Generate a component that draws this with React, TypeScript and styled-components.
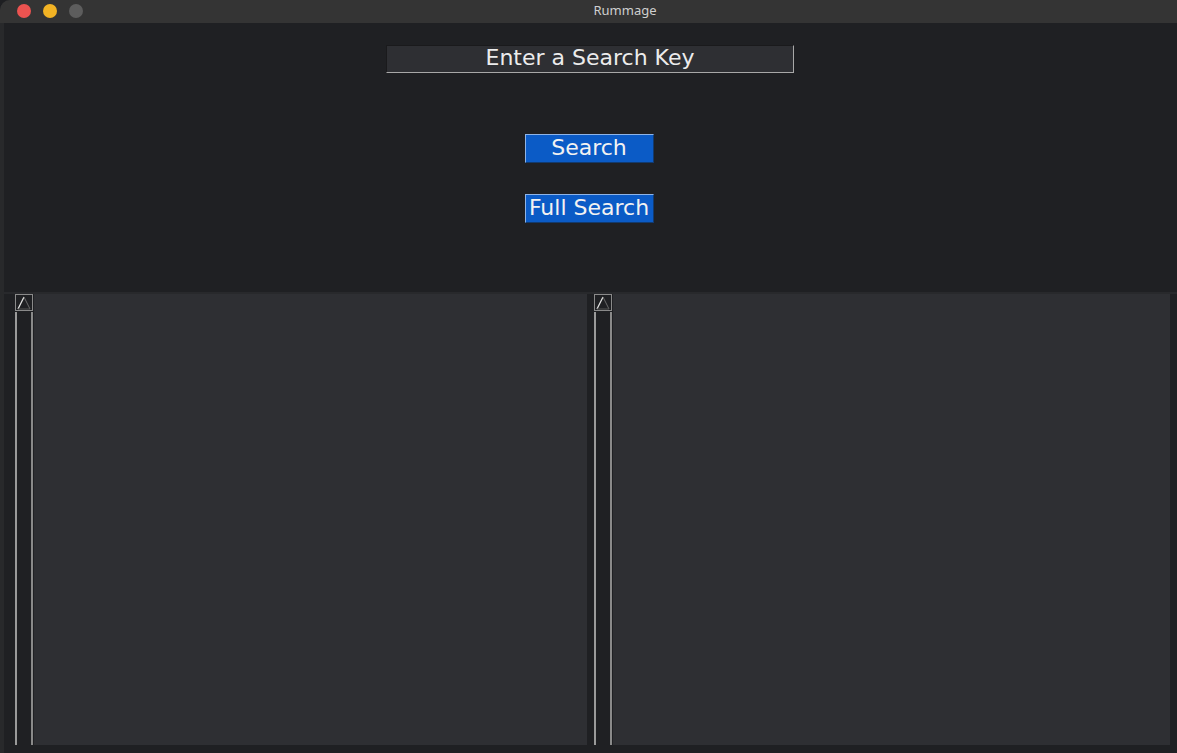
import React from "react";
import styled, { createGlobalStyle } from "styled-components";

const Global = createGlobalStyle`
  html, body { margin: 0; padding: 0; background: #1e1f22; }
  #root { width: 1177px; height: 753px; }
`;

const Window = styled.div`
  width: 1177px;
  height: 753px;
  display: flex;
  flex-direction: column;
  background: #28292b;
  border-radius: 10px 0 0 0;
  overflow: hidden;
  font-family: "DejaVu Sans", sans-serif;
`;

const TitleBar = styled.div`
  height: 23px;
  flex: none;
  background: #343434;
  position: relative;
  display: flex;
  align-items: center;
  justify-content: center;
`;

const Title = styled.div`
  font-family: "Noto Sans", "DejaVu Sans", sans-serif;
  font-size: 13px;
  color: #cfcfcf;
  padding-left: 73px;
  padding-bottom: 3px;
`;

const Lights = styled.div`
  position: absolute;
  left: 17px;
  top: 4px;
  display: flex;
  gap: 12px;
`;

const Light = styled.span<{ $c: string }>`
  width: 14px;
  height: 14px;
  border-radius: 50%;
  background: ${(p) => p.$c};
`;

const Body = styled.div`
  flex: 1;
  margin-left: 4px;
  background: #1f2023;
  display: flex;
  flex-direction: column;
`;

const Top = styled.div`
  height: 271px;
  flex: none;
  display: flex;
  flex-direction: column;
  align-items: center;
  padding-top: 22px;
  box-sizing: border-box;
  border-bottom: 2px solid #28292c;
`;

const Entry = styled.div`
  width: 408px;
  height: 28px;
  box-sizing: border-box;
  background: #2e2f33;
  border-top: 1px solid #1a1a1c;
  border-left: 1px solid #1a1a1c;
  border-right: 1px solid #a8a8a8;
  border-bottom: 1px solid #a8a8a8;
  color: #ececec;
  font-size: 22px;
  line-height: 1;
  padding-bottom: 2px;
  display: flex;
  align-items: center;
  justify-content: center;
  margin-right: 1px;
`;

const Button = styled.div<{ $mt: number }>`
  margin-top: ${(p) => p.$mt}px;
  width: 129px;
  height: 29px;
  box-sizing: border-box;
  background: #0b5bc6;
  border-top: 1px solid #8fb4e6;
  border-left: 1px solid #8fb4e6;
  border-right: 1px solid #123a6e;
  border-bottom: 1px solid #123a6e;
  color: #f2f2f2;
  font-size: 22px;
  line-height: 1;
  padding-bottom: 2px;
  display: flex;
  align-items: center;
  justify-content: center;
  margin-right: 3px;
  white-space: nowrap;
`;

const Panels = styled.div`
  height: 451px;
  flex: none;
  display: flex;
  gap: 7px;
  padding-left: 11px;
`;

const Panel = styled.div<{ $w: number }>`
  width: ${(p) => p.$w}px;
  display: flex;
  flex: none;
`;

const Scrollbar = styled.div`
  width: 18px;
  flex: none;
  display: flex;
  flex-direction: column;
  background: #1f2023;
`;

const ArrowBox = styled.div`
  height: 17px;
  box-sizing: border-box;
  border: 1px solid #8a8a8a;
  display: flex;
  align-items: center;
  justify-content: center;
`;

const Trough = styled.div`
  flex: 1;
  box-sizing: border-box;
  margin-top: 1px;
  border-left: 2px solid #9a9a9a;
  border-right: 2px solid #8a8a8a;
`;

const TextArea = styled.div`
  flex: 1;
  background: #2e2f33;
  margin-left: 1px;
`;

const Arrow = () => (
  <svg width="14" height="14" viewBox="0 0 14 14">
    <line x1="1" y1="13" x2="7" y2="1" stroke="#e4e4e4" strokeWidth="1.3" />
    <line x1="7" y1="1" x2="13" y2="13" stroke="#6a6a6a" strokeWidth="1" />
    <line x1="1" y1="13" x2="13" y2="13" stroke="#555" strokeWidth="1" />
  </svg>
);

const TextPanel = ({ w }: { w: number }) => (
  <Panel $w={w}>
    <Scrollbar>
      <ArrowBox>
        <Arrow />
      </ArrowBox>
      <Trough />
    </Scrollbar>
    <TextArea />
  </Panel>
);

export default function App() {
  return (
    <>
      <Global />
      <Window>
        <TitleBar>
          <Lights>
            <Light $c="#ec5350" />
            <Light $c="#f2b324" />
            <Light $c="#5d5d5d" />
          </Lights>
          <Title>Rummage</Title>
        </TitleBar>
        <Body>
          <Top>
            <Entry>Enter a Search Key</Entry>
            <Button $mt={61}>Search</Button>
            <Button $mt={31}>Full Search</Button>
          </Top>
          <Panels>
            <TextPanel w={572} />
            <TextPanel w={576} />
          </Panels>
        </Body>
      </Window>
    </>
  );
}
